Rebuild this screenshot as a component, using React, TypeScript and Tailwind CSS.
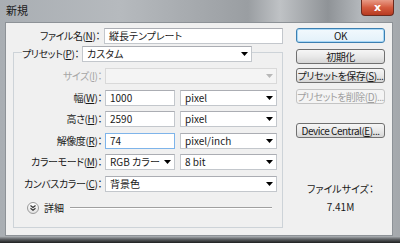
import React from 'react'

const Arrow = ({ disabled }: { disabled?: boolean }) => (
  <svg width="7" height="4" viewBox="0 0 7 4" className="ml-auto mr-[3px] shrink-0">
    <polygon points="0,0 7,0 3.5,4" fill={disabled ? '#b8b8b8' : '#000'} />
  </svg>
)

const Input = ({ w, value, focus }: { w: string; value: string; focus?: boolean }) => (
  <div
    className={`${w} h-[16px] bg-white border flex items-center pl-[4px] whitespace-nowrap overflow-hidden ${
      focus ? 'border-[#7eb4ea]' : 'border-[#c3c7cc] border-t-[#abadb3]'
    }`}
  >
    {value}
  </div>
)

const Select = ({ w, value, disabled }: { w: string; value: string; disabled?: boolean }) => (
  <div
    className={`${w} h-[16px] shrink-0 border flex items-center pl-[4px] whitespace-nowrap overflow-hidden ${
      disabled ? 'bg-[#f4f4f4] border-[#d9d9d9]' : 'bg-white border-[#c3c7cc] border-t-[#abadb3]'
    }`}
  >
    <span>{value}</span>
    <Arrow disabled={disabled} />
  </div>
)

const Label = ({ w, children, disabled }: { w: string; children: React.ReactNode; disabled?: boolean }) => (
  <div
    className={`${w} flex justify-end whitespace-nowrap shrink-0 tracking-[-0.4px] ${disabled ? 'text-[#a6a6a6]' : ''}`}
  >
    <span>{children}</span>
  </div>
)

const Button = ({ children, primary, disabled, className = '' }: { children: React.ReactNode; primary?: boolean; disabled?: boolean; className?: string }) => (
  <div
    className={`h-[15px] rounded-[3px] border flex items-center justify-center leading-none whitespace-nowrap tracking-[-0.5px] ${className} ${
      primary
        ? 'border-[#3c7fb1] bg-gradient-to-b from-[#f2f9fd] to-[#e3f1fa] shadow-[inset_0_0_0_1px_#a8d8f6]'
        : disabled
          ? 'border-[#c4c4c4] bg-[#f4f4f4] text-[#a0a0a0]'
          : 'border-[#707070] bg-gradient-to-b from-[#f6f6f6] via-[#e9e9e9] to-[#d6d6d6]'
    }`}
  >
    {children}
  </div>
)

export default function App() {
  return (
    <div className="w-[400px] h-[243px] overflow-hidden flex flex-col bg-[linear-gradient(90deg,#a9aeb3_0%,#b6babe_30%,#9a9ea2_62%,#bfc2c5_70%,#8f9397_82%,#b3b7bb_90%,#a4a8ac_100%)] text-[10px] leading-[14px] text-[#1a1a1a] font-['Noto_Sans_CJK_JP',sans-serif] [font-feature-settings:'palt']">
      {/* title bar */}
      <div className="h-[22px] flex items-start justify-between pl-[6px] pr-[6px]">
        <div className="pt-[3px] text-[11px]">新規</div>
        <div className="w-[33px] h-[16px] rounded-b-[4px] border border-t-0 border-[#6b2a1e] bg-gradient-to-b from-[#e79a86] via-[#d45b3f] to-[#b73a20] flex items-center justify-center text-white font-bold text-[11px] font-['DejaVu_Sans',sans-serif]">
          x
        </div>
      </div>

      {/* body */}
      <div className="ml-[5px] mr-[7px] h-[214px] bg-[#f0f0f0] border border-[#8d9297] flex">
        {/* left column */}
        <div className="w-[278px] shrink-0 flex flex-col">
          <div className="mt-[5px] h-[16px] flex items-center">
            <Label w="w-[94px]">
              ファイル名(<u>N</u>)：
            </Label>
            <div className="ml-[4px]">
              <Input w="w-[179px]" value="縦長テンプレート" />
            </div>
          </div>

          {/* preset group */}
          <div className="ml-[7px] mt-[8px] w-[270px] h-[176px] border border-[#cdd3d8] flex flex-col">
            <div className="-mt-[7px] h-[16px] flex items-center pl-[8px]">
              <div className="w-[60px] h-[14px] bg-[#f0f0f0] pr-[3px] flex justify-end whitespace-nowrap tracking-[-0.4px]">
                <span>
                  プリセット(<u>P</u>)：
                </span>
              </div>
              <Select w="w-[170px]" value="カスタム" />
            </div>

            <div className="mt-[6px] flex flex-col gap-[5.5px]">
              <div className="h-[16px] flex items-center">
                <Label w="w-[88px]" disabled>
                  サイズ(<u>I</u>)：
                </Label>
                <div className="ml-[3px]">
                  <Select w="w-[172px]" value="" disabled />
                </div>
              </div>
              <div className="h-[16px] flex items-center">
                <Label w="w-[88px]">
                  幅(<u>W</u>)：
                </Label>
                <div className="ml-[3px] flex gap-[5px]">
                  <Input w="w-[70px]" value="1000" />
                  <Select w="w-[97px]" value="pixel" />
                </div>
              </div>
              <div className="h-[16px] flex items-center">
                <Label w="w-[88px]">
                  高さ(<u>H</u>)：
                </Label>
                <div className="ml-[3px] flex gap-[5px]">
                  <Input w="w-[70px]" value="2590" />
                  <Select w="w-[97px]" value="pixel" />
                </div>
              </div>
              <div className="h-[16px] flex items-center">
                <Label w="w-[88px]">
                  解像度(<u>R</u>)：
                </Label>
                <div className="ml-[3px] flex gap-[5px]">
                  <Input w="w-[70px]" value="74" focus />
                  <Select w="w-[97px]" value="pixel/inch" />
                </div>
              </div>
              <div className="h-[16px] flex items-center">
                <Label w="w-[88px]">
                  カラーモード(<u>M</u>)：
                </Label>
                <div className="ml-[3px] flex gap-[5px]">
                  <Select w="w-[70px]" value="RGB カラー" />
                  <Select w="w-[97px]" value="8 bit" />
                </div>
              </div>
              <div className="h-[16px] flex items-center">
                <Label w="w-[88px]">
                  カンバスカラー(<u>C</u>)：
                </Label>
                <div className="ml-[3px]">
                  <Select w="w-[172px]" value="背景色" />
                </div>
              </div>
            </div>

            <div className="mt-[9px] h-[14px] flex items-center pl-[13px]">
              <div className="w-[12px] h-[12px] rounded-full border border-[#9a9a9a] bg-gradient-to-b from-white to-[#e2e2e2] flex items-center justify-center">
                <svg width="6" height="6" viewBox="0 0 6 6">
                  <polyline points="0.5,0.5 3,2.5 5.5,0.5" fill="none" stroke="#333" strokeWidth="1.1" />
                  <polyline points="0.5,3.2 3,5.2 5.5,3.2" fill="none" stroke="#333" strokeWidth="1.1" />
                </svg>
              </div>
              <div className="ml-[5px]">詳細</div>
              <div className="flex-1 ml-[6px] mr-[10px] border-t border-[#a0a0a0] border-b border-b-white" />
            </div>
          </div>
        </div>

        {/* right column */}
        <div className="ml-[12px] w-[89px] flex flex-col">
          <Button primary className="mt-[5px]">OK</Button>
          <Button className="mt-[6px]">初期化</Button>
          <Button className="mt-[4px]">
            プリセットを保存(<u>S</u>)...
          </Button>
          <Button disabled className="mt-[6px]">
            プリセットを削除(<u>D</u>)...
          </Button>
          <Button className="mt-[19px]">
            Device Central(<u>E</u>)...
          </Button>
          <div className="mt-[44px] h-[14px] text-center">ファイルサイズ：</div>
          <div className="mt-[4px] h-[14px] text-center">7.41M</div>
        </div>
      </div>

      {/* bottom frame */}
      <div className="h-[7px] bg-gradient-to-b from-[#b4b8bc] via-[#5a5d60] to-[#1e1f20]" />
    </div>
  )
}
